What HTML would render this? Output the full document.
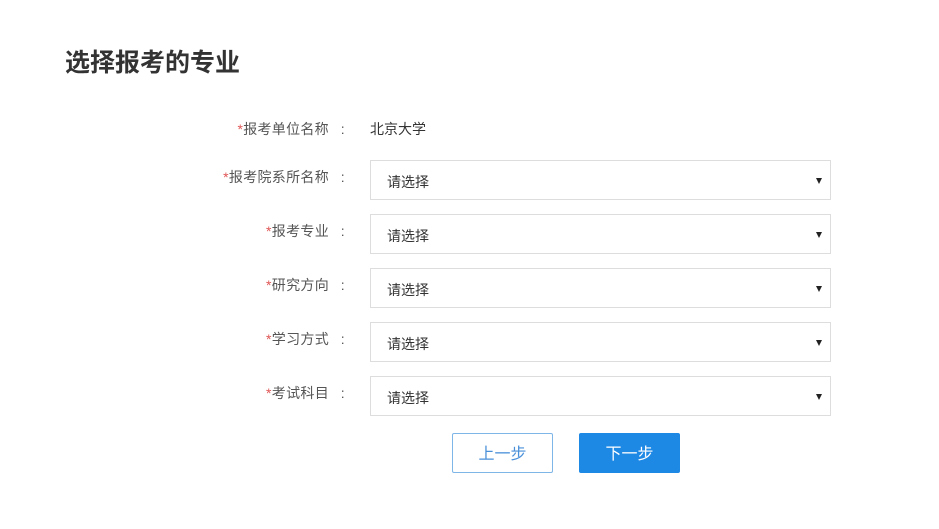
<!DOCTYPE html>
<html><head><meta charset="utf-8"><style>
body{margin:0;width:939px;height:529px;background:#fff;font-family:"Liberation Sans","Noto Sans CJK SC",sans-serif;position:relative;overflow:hidden}
.t{position:absolute;left:65px;top:43px;font-size:25px;font-weight:bold;color:#333}
.l{position:absolute;right:594px;font-size:14px;color:#555;white-space:nowrap;letter-spacing:0.3px}
.l b{color:#e05555;font-weight:normal}
.l i{font-style:normal;display:inline-block;width:16px;text-align:right}
.s{position:absolute;left:370px;width:461px;height:40px;border:1px solid #ddd;box-sizing:border-box;font-size:14px;color:#333;line-height:42px;padding-left:16px}
.s:after{content:"";position:absolute;right:8px;top:17px;border-left:3.5px solid transparent;border-right:3.5px solid transparent;border-top:6px solid #222}
.btn{position:absolute;top:433px;width:101px;height:40px;box-sizing:border-box;font-size:16px;text-align:center;line-height:41px;border-radius:2px}
</style></head><body>
<div class="t">选择报考的专业</div>
<div class="l" style="top:119px"><b>*</b>报考单位名称<i>:</i></div>
<div style="position:absolute;left:370px;top:119px;font-size:14px;color:#333">北京大学</div>
<div class="l" style="top:167px"><b>*</b>报考院系所名称<i>:</i></div><div class="s" style="top:160px">请选择</div>
<div class="l" style="top:221px"><b>*</b>报考专业<i>:</i></div><div class="s" style="top:214px">请选择</div>
<div class="l" style="top:275px"><b>*</b>研究方向<i>:</i></div><div class="s" style="top:268px">请选择</div>
<div class="l" style="top:329px"><b>*</b>学习方式<i>:</i></div><div class="s" style="top:322px">请选择</div>
<div class="l" style="top:383px"><b>*</b>考试科目<i>:</i></div><div class="s" style="top:376px">请选择</div>
<div class="btn" style="left:452px;border:1px solid #7fb6e8;color:#4a90d9">上一步</div>
<div class="btn" style="left:579px;background:#1e88e5;color:#fff;border:1px solid #1e88e5">下一步</div>
</body></html>
